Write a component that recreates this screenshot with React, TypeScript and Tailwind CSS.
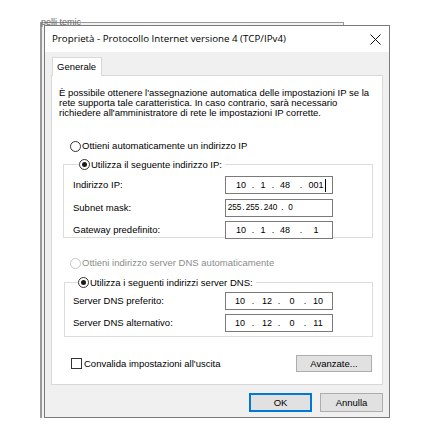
import React from "react";

function Radio({ checked, disabled }: { checked?: boolean; disabled?: boolean }) {
  return (
    <span
      className={`inline-flex items-center justify-center w-[11px] h-[11px] rounded-full border bg-white shrink-0 ${
        disabled ? "border-[#c4c4c4]" : "border-[#333333]"
      }`}
    >
      {checked && <span className="w-[5px] h-[5px] rounded-full bg-[#1a1a1a]" />}
    </span>
  );
}

type Seg = [string, number];

// centers are relative to the outer left edge of the box
function IpBox({ segs, caret, tight }: { segs: Seg[]; caret?: boolean; tight?: boolean }) {
  const items: { t: string; w: number }[] = [];
  const lead = segs[0][1] - 1;
  let x = segs[0][1];
  segs.forEach(([t, c], i) => {
    const next = segs[i + 1];
    const nextC = next ? next[1] : c;
    items.push({ t, w: nextC - x });
    x = nextC;
  });
  return (
    <div
      className={`w-[108px] h-[18px] border border-[#7a7a7a] bg-white flex items-center text-black ${
        tight ? "text-[8.2px]" : "text-[9px]"
      }`}
    >
      <span className="shrink-0" style={{ width: lead }} />
      {items.map((s, i) => (
        <span key={i} className="shrink-0 flex" style={{ width: s.w }}>
          <span className="w-0 flex justify-center whitespace-nowrap">{s.t}</span>
        </span>
      ))}
      {caret && <span className="w-px h-[13px] bg-black ml-[9px]" />}
    </div>
  );
}

const ip1: Seg[] = [
  ["10", 16],
  [".", 28],
  ["1", 38],
  [".", 48],
  ["48", 60],
  [".", 76],
  ["001", 91],
];
const ip2: Seg[] = [
  ["255", 9.5],
  [".", 18.5],
  ["255", 27.5],
  [".", 36.5],
  ["240", 45.5],
  [".", 57.5],
  ["0", 65.5],
];
const ip3: Seg[] = [
  ["10", 16],
  [".", 28],
  ["1", 38],
  [".", 48],
  ["48", 60],
  [".", 76],
  ["1", 91],
];
const dns1: Seg[] = [
  ["10", 15],
  [".", 28],
  ["12", 42],
  [".", 54],
  ["0", 67],
  [".", 80],
  ["10", 93],
];
const dns2: Seg[] = [
  ["10", 15],
  [".", 28],
  ["12", 42],
  [".", 54],
  ["0", 67],
  [".", 80],
  ["11", 93],
];

function Row({ label, children }: { label: string; children: React.ReactNode }) {
  return (
    <div className="flex items-center justify-between h-[18px]">
      <span>{label}</span>
      {children}
    </div>
  );
}

export default function App() {
  return (
    <div className="relative w-[428px] h-[442px] bg-white overflow-hidden font-['Liberation_Sans',Arial,sans-serif] text-black">
      {/* background window */}
      <div className="absolute left-[40px] top-[22px] w-[304px] h-[396px] border-l-2 border-t border-r border-[#9a9a9a] bg-[#f3f3f3]">
        <div className="absolute left-[-1px] top-[-5px] text-[9px] text-[#666] leading-none whitespace-nowrap">
          pelli temic
        </div>
      </div>

      {/* dialog */}
      <div className="absolute left-[44px] top-[25px] w-[346px] h-[393px] border border-[#7a7a7a] bg-[#f0f0f0] flex flex-col">
        {/* title bar */}
        <div className="h-[26px] bg-white flex items-center justify-between pl-[7px] pr-[8px] shrink-0">
          <span className="text-[9.75px] font-['Open_Sans',sans-serif] text-black">
            Proprietà - Protocollo Internet versione 4 (TCP/IPv4)
          </span>
          <svg width="11" height="11" viewBox="0 0 11 11">
            <path d="M0.5 0.5 L10.5 10.5 M10.5 0.5 L0.5 10.5" stroke="#111" strokeWidth="1" />
          </svg>
        </div>

        <div className="flex flex-col px-[6px] pt-[5px] text-[9.5px] leading-[10px]">
          {/* tab */}
          <div className="relative z-10 ml-px w-[50px] h-[19px] border border-b-0 border-[#d9d9d9] bg-white flex items-center pl-[4px]">
            Generale
          </div>
          {/* panel */}
          <div className="-mt-px h-[310px] border border-[#d9d9d9] bg-white flex flex-col pl-[7px] pr-[9px]">
            <p className="mt-[12px] leading-[10px]">
              È possibile ottenere l'assegnazione automatica delle impostazioni IP se la
              <br />
              rete supporta tale caratteristica. In caso contrario, sarà necessario
              <br />
              richiedere all'amministratore di rete le impostazioni IP corrette.
            </p>

            <div className="mt-[22px] ml-[11px] flex items-center gap-[1px] h-[12px]">
              <Radio />
              <span>Ottieni automaticamente un indirizzo IP</span>
            </div>

            <fieldset className="mt-[7px] ml-[4px] h-[79px] border border-[#dcdcdc] pl-[9px] pr-[39px] pt-[6px] flex flex-col gap-[4.5px]">
              <legend className="ml-[6px] flex items-center gap-[1px] pr-[3px]">
                <Radio checked />
                <span>Utilizza il seguente indirizzo IP:</span>
              </legend>
              <Row label="Indirizzo IP:">
                <IpBox segs={ip1} caret />
              </Row>
              <Row label="Subnet mask:">
                <IpBox segs={ip2} tight />
              </Row>
              <Row label="Gateway predefinito:">
                <IpBox segs={ip3} />
              </Row>
            </fieldset>

            <div className="mt-[19px] ml-[11px] flex items-center gap-[1px] h-[12px] text-[#8c8c8c]">
              <Radio disabled />
              <span>Ottieni indirizzo server DNS automaticamente</span>
            </div>

            <fieldset className="mt-[8px] ml-[5px] h-[60px] border border-[#dcdcdc] pl-[8px] pr-[39px] pt-[3.5px] flex flex-col gap-[4.5px]">
              <legend className="ml-[5px] flex items-center gap-[1px] pr-[3px]">
                <Radio checked />
                <span>Utilizza i seguenti indirizzi server DNS:</span>
              </legend>
              <Row label="Server DNS preferito:">
                <IpBox segs={dns1} />
              </Row>
              <Row label="Server DNS alternativo:">
                <IpBox segs={dns2} />
              </Row>
            </fieldset>

            <div className="mt-[18px] flex items-center justify-between pl-[12px] pr-[1px]">
              <div className="flex items-center gap-[2px]">
                <span className="w-[11px] h-[11px] border border-[#333] bg-white" />
                <span>Convalida impostazioni all'uscita</span>
              </div>
              <button className="w-[76px] h-[17px] border border-[#adadad] bg-[#e1e1e1] text-[9.5px]">
                Avanzate...
              </button>
            </div>
          </div>

          {/* buttons */}
          <div className="mt-[8px] flex justify-end gap-[8px]">
            <button className="w-[63px] h-[19px] border-2 border-[#0078d7] bg-[#e1e1e1] text-[9.5px]">OK</button>
            <button className="w-[63px] h-[19px] border border-[#adadad] bg-[#e1e1e1] text-[9.5px]">Annulla</button>
          </div>
        </div>
      </div>
    </div>
  );
}
